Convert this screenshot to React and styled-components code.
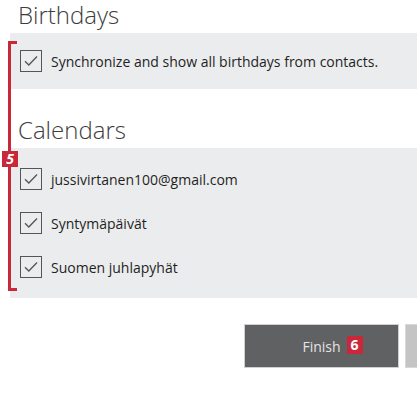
import React from 'react';
import styled, { createGlobalStyle } from 'styled-components';

const Global = createGlobalStyle`
  html, body { margin: 0; padding: 0; background: #ffffff; }
  body { font-family: "Open Sans", "Noto Sans", sans-serif; color: #222; }
`;

const Page = styled.div`
  position: relative;
  width: 417px;
  height: 395px;
  overflow: hidden;
  padding-left: 10px;
  box-sizing: border-box;
`;

const Heading = styled.h2`
  margin: 0;
  padding-left: 8px;
  font-size: 24px;
  font-weight: 300;
  line-height: 30px;
  color: #3d3d3d;
  padding-top: ${p => p.$top}px;
  height: ${p => p.$h}px;
  box-sizing: border-box;
`;

const Panel = styled.div`
  background: #ebeced;
  display: flex;
  flex-direction: column;
  gap: ${p => p.$gap || 0}px;
  padding: ${p => p.$pad}px 0 ${p => p.$pad}px 10px;
`;

const Row = styled.label`
  display: flex;
  align-items: center;
  gap: 9px;
  height: 22px;
  font-size: 14px;
  color: #1f1f1f;
  white-space: nowrap;
`;

const Box = styled.span`
  width: 22px;
  height: 22px;
  box-sizing: border-box;
  border: 1.5px solid #555;
  display: flex;
  align-items: center;
  justify-content: center;
  flex: none;
`;

const Bracket = styled.div`
  position: absolute;
  left: 8px;
  top: 41px;
  width: 9px;
  height: 250px;
  box-sizing: border-box;
  border: 3px solid #c8283a;
  border-right: none;
`;

const Badge = styled.span`
  position: absolute;
  display: flex;
  align-items: center;
  justify-content: center;
  width: ${p => p.$w}px;
  height: ${p => p.$h}px;
  background: #c8283a;
  color: #fff;
  font-family: "Open Sans", sans-serif;
  font-weight: 700;
  font-size: 14px;
  line-height: 1;
`;

const Badge5 = styled(Badge)`
  left: 2px;
  top: 151px;
  font-style: italic;
`;

const Buttons = styled.div`
  display: flex;
  gap: 6px;
  padding-left: 234px;
  margin-top: 26px;
`;

const Button = styled.div`
  height: 44px;
  flex: none;
  width: ${p => p.$w}px;
  box-sizing: border-box;
  background: ${p => p.$bg};
  border: 1px solid ${p => p.$border};
  display: flex;
  align-items: center;
  justify-content: center;
  color: #e4e4e4;
  font-size: 14px;
`;

const Label = styled.span`
  position: relative;
`;

const Badge6 = styled(Badge)`
  left: calc(100% + 6px);
  top: -1px;
`;

const Check = () => (
  <Box>
    <svg width="16" height="16" viewBox="0 0 16 16">
      <path d="M2 8.3 L5.8 12 L14 3.5" fill="none" stroke="#555" strokeWidth="1.3" />
    </svg>
  </Box>
);

const calendars = ['jussivirtanen100@gmail.com', 'Syntymäpäivät', 'Suomen juhlapyhät'];

export default function App() {
  return (
    <Page>
      <Global />
      <Heading $top={0} $h={33}>Birthdays</Heading>
      <Panel $pad={17}>
        <Row><Check />Synchronize and show all birthdays from contacts.</Row>
      </Panel>
      <Heading $top={26} $h={59}>Calendars</Heading>
      <Panel $pad={20} $gap={22}>
        {calendars.map(c => (
          <Row key={c}><Check />{c}</Row>
        ))}
      </Panel>
      <Buttons>
        <Button $w={155} $bg="#606163" $border="#d0d0d0">
          <Label>Finish<Badge6 $w={16} $h={18}>6</Badge6></Label>
        </Button>
        <Button $w={40} $bg="#c4c4c4" $border="#d8d8d8" />
      </Buttons>
      <Bracket />
      <Badge5 $w={16} $h={16}>5</Badge5>
    </Page>
  );
}
